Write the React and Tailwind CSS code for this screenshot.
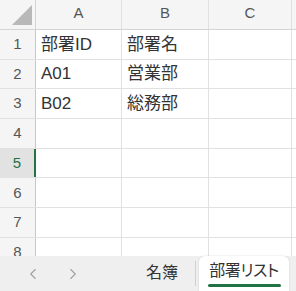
import React from 'react';
import { ChevronLeft, ChevronRight } from 'lucide-react';

const font = { fontFamily: '"Liberation Sans", "Noto Sans CJK JP", sans-serif' };

const rows = [
    ['部署ID', '部署名', ''],
    ['A01', '営業部', ''],
    ['B02', '総務部', ''],
    ['', '', ''],
    ['', '', ''],
    ['', '', ''],
    ['', '', ''],
    ['', '', ''],
];

const App = () => (
    <div className="w-[296px] h-[291px] bg-white flex flex-col overflow-hidden" style={font}>
        <div className="h-[256px] overflow-hidden">
            {/* column header */}
            <div className="flex h-[30px] bg-[#f5f5f5] border-b border-[#d4d4d4]">
                <div className="w-[36px] shrink-0 border-r border-[#d4d4d4] flex items-end justify-end pr-[3px] pb-[4px]">
                    <svg width="20" height="20" viewBox="0 0 20 20">
                        <polygon points="20,0 20,20 0,20" fill="#b8b8b8" />
                    </svg>
                </div>
                {['A', 'B', 'C'].map((c, i) => (
                    <div
                        key={c}
                        className={`${i === 0 ? 'w-[86px]' : i === 1 ? 'w-[87px]' : 'w-[83px]'} shrink-0 border-r border-[#e1e1e1] flex items-center justify-center text-[15px] text-[#555] pb-[2px]`}
                    >
                        {c}
                    </div>
                ))}
                <div className="flex-1" />
            </div>

            {rows.map((r, i) => {
                const sel = i === 4;
                return (
                    <div key={i} className="flex h-[29.7px] border-b border-[#e1e1e1]">
                        <div
                            className={`w-[36px] shrink-0 flex items-center justify-center text-[15px] ${sel ? 'bg-[#e2e2e2] text-[#217346] border-r-2 border-[#217346]' : 'bg-[#f5f5f5] text-[#555] border-r border-[#c8c8c8]'}`}
                        >
                            {i + 1}
                        </div>
                        {r.map((v, j) => (
                            <div
                                key={j}
                                className={`${j === 0 ? 'w-[86px]' : j === 1 ? 'w-[87px]' : 'w-[83px]'} shrink-0 border-r border-[#e1e1e1] flex items-center pl-[5px] text-[17px] text-[#333] whitespace-nowrap`}
                            >
                                {v}
                            </div>
                        ))}
                        <div className="flex-1" />
                    </div>
                );
            })}
        </div>

        {/* sheet tabs */}
        <div className="h-[35px] bg-[#efefef] flex items-stretch">
            <div className="flex items-center pl-[24px] gap-[22px] text-[#a0a0a0]">
                <ChevronLeft size={18} strokeWidth={1.5} />
                <ChevronRight size={18} strokeWidth={1.5} />
            </div>
            <div className="ml-[64px] flex items-center text-[16px] text-[#333] pb-[2px]">名簿</div>
            <div className="ml-[17px] my-[5px] w-px bg-[#d0d0d0]" />
            <div className="ml-[3px] w-[90px] bg-white rounded-t-[6px] shadow-[0_0_2px_rgba(0,0,0,0.15)] flex flex-col items-center justify-center">
                <span className="text-[16px] text-[#333] leading-[20px] [font-feature-settings:'palt'] tracking-[-0.5px]">部署リスト</span>
                <div className="mt-[3px] w-[73px] h-[3px] rounded-full bg-[#217346]" />
            </div>
        </div>
    </div>
);

export default App;
